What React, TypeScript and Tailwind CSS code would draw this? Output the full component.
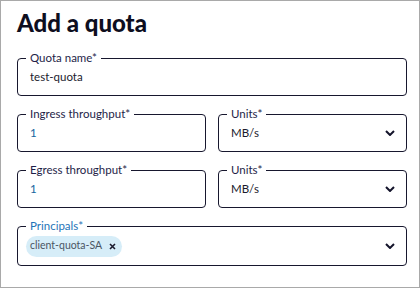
const Chevron = () => (
  <svg width="10" height="6" viewBox="0 0 10 6" className="shrink-0">
    <path d="M1 1 L5 5 L9 1" fill="none" stroke="#14142b" strokeWidth="2" />
  </svg>
);

const Field = ({
  label,
  focused,
  children,
}: {
  label: string;
  focused?: boolean;
  children: React.ReactNode;
}) => (
  <fieldset className="border border-[#17172e] rounded-[4px] px-2 pb-[6px] min-w-0">
    <legend
      className={`px-1 text-[11.5px] leading-[14px] ${focused ? "text-[#1f74b8]" : "text-[#1e1e48]"}`}
    >
      {label}
    </legend>
    {children}
  </fieldset>
);

const UnitsField = () => (
  <Field label="Units*">
    <div className="h-[24px] flex items-center justify-between pl-1 pr-[3px] text-[11.5px]">
      <span>MB/s</span>
      <Chevron />
    </div>
  </Field>
);

export default function App() {
  return (
    <div
      className="w-[420px] h-[288px] border border-[#a9a9a9] bg-white pl-4 pr-3 text-[#1b1b2e]"
      style={{ fontFamily: 'Lato, "Noto Sans", sans-serif' }}
    >
      <h1 className="pt-[7px] pb-[13px] text-[24px] leading-[30px] font-black text-[#0e0e1e]">
        Add a quota
      </h1>

      <div className="flex flex-col gap-[11px]">
        <Field label="Quota name*">
          <div className="h-[24px] flex items-center px-1 text-[11.5px]">test-quota</div>
        </Field>

        <div className="grid grid-cols-2 gap-3">
          <Field label="Ingress throughput*">
            <div className="h-[24px] flex items-center px-1 text-[11.5px] text-[#16659e]">1</div>
          </Field>
          <UnitsField />
        </div>

        <div className="grid grid-cols-2 gap-3">
          <Field label="Egress throughput*">
            <div className="h-[24px] flex items-center px-1 text-[11.5px] text-[#16659e]">1</div>
          </Field>
          <UnitsField />
        </div>

        <Field label="Principals*" focused>
          <div className="h-[26px] flex items-center justify-between">
            <span className="flex items-center gap-[7px] h-[21px] rounded-full bg-[#d6edf8] pl-1 pr-[6px] text-[10.5px] text-[#4a5563]">
              client-quota-SA
              <svg width="7" height="7" viewBox="0 0 7 7">
                <path d="M1 1 L6 6 M6 1 L1 6" stroke="#1b1b2e" strokeWidth="1.6" />
              </svg>
            </span>
            <span className="pr-[3px]">
              <Chevron />
            </span>
          </div>
        </Field>
      </div>
    </div>
  );
}
